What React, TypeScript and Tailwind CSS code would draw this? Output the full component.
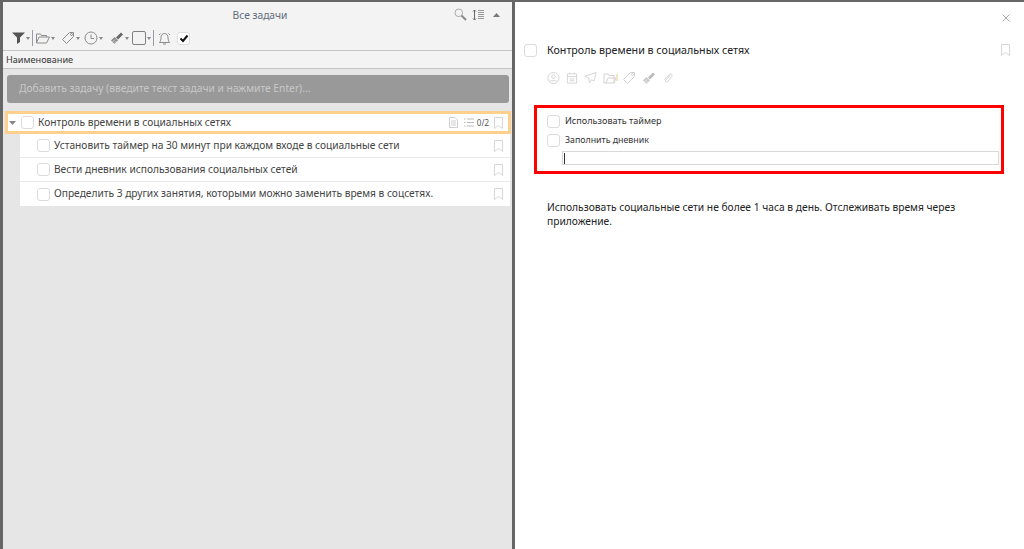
const font = "font-['Noto_Sans','Open_Sans',sans-serif]";

function Check({ checked = false }: { checked?: boolean }) {
  return (
    <span className="flex h-[13px] w-[13px] shrink-0 items-center justify-center rounded-[3px] border border-[#dcdcdc] bg-white">
      {checked && (
        <svg width="10" height="9" viewBox="0 0 10 9"><path d="M1.5 4.5 L4 7 L8.5 1.5" fill="none" stroke="#111" strokeWidth="2" /></svg>
      )}
    </span>
  );
}

function Bookmark({ c = '#d6d6d6' }: { c?: string }) {
  return (
    <svg width="9" height="12" viewBox="0 0 9 12" className="shrink-0"><path d="M.5.5h8v11L4.5 8.5.5 11.5z" fill="none" stroke={c} /></svg>
  );
}

function Caret() {
  return (
    <svg width="4" height="3" viewBox="0 0 4 3" className="ml-[1px]"><path d="M0 0h4L2 3z" fill="#888" /></svg>
  );
}

const sGray = { fill: 'none', stroke: '#8c8c8c', strokeWidth: 1 };
const sLight = { fill: 'none', stroke: '#d2d2d2', strokeWidth: 1 };

function Tag({ s }: { s: typeof sGray }) {
  return (
    <svg width="14" height="14" viewBox="0 0 14 14"><path d="M8.5 1.500h4V5.500L5.500 12.500 1.500 8.500z" {...s} /><circle cx="10.500" cy="3.500" r="1" {...s} /></svg>
  );
}

function Brush({ a, b }: { a: string; b: string }) {
  return (
    <svg width="14" height="14" viewBox="0 0 14 14">
      <path d="M1 9.500 4.500 13l3.500-3.500L4.500 6z" fill={a} />
      <path d="M2.500 11 5 8.500M4 12.500 6.500 10" stroke="#fff" strokeWidth=".7" />
      <path d="M6 6.500 11 1.500l2 2-5 5z" fill={b} />
    </svg>
  );
}

function Toolbar() {
  return (
    <div className="flex h-[22px] items-center pb-[2px] pl-[9px]">
      <span className="flex items-center">
        <svg width="13" height="12" viewBox="0 0 13 12"><path d="M0 .5h13L8 5.500V10L5 12V5.500z" fill="#555" /></svg>
        <Caret />
      </span>
      <span className="ml-[2px] h-[16px] w-px bg-[#9a9aa8]" />
      <span className="ml-[3px] flex items-center">
        <svg width="14" height="11" viewBox="0 0 14 11"><path d="M.5 10V1h4l1 1.500h5V4M.5 10h10l3-6H3z" {...sGray} /></svg>
        <Caret />
      </span>
      <span className="ml-[6px] flex items-center">
        <Tag s={sGray} />
        <Caret />
      </span>
      <span className="ml-[4px] flex items-center">
        <svg width="14" height="14" viewBox="0 0 14 14"><circle cx="7" cy="7" r="6" {...sGray} /><path d="M7 3.500V7.500H10" {...sGray} /></svg>
        <Caret />
      </span>
      <span className="ml-[7px] flex items-center">
        <Brush a="#8a8a8a" b="#666" />
        <Caret />
      </span>
      <span className="ml-[3px] flex items-center">
        <span className="h-[14px] w-[14px] rounded-[2px] border border-[#808080]" />
        <Caret />
      </span>
      <span className="ml-[2px] h-[16px] w-px bg-[#9a9aa8]" />
      <svg width="13" height="13" viewBox="0 0 13 13" className="ml-[4px]"><path d="M6.500 1.500c-2.500 0-3.500 2-3.500 4s-.5 3.500-1.500 5h10c-1-1.500-1.500-3-1.500-5s-1-4-3.500-4zM5 12h3M1 3l1.500-1.500M12 3l-1.500-1.500" {...sGray} /></svg>
      <span className="ml-[6px]"><Check checked /></span>
    </div>
  );
}

function SubTask({ text }: { text: string }) {
  return (
    <div className="flex h-[24px] items-center border-b border-[#e8e8e8] bg-white pr-[7px] pl-[17px] last:border-b-0">
      <Check />
      <span className="ml-[4px] flex-1 text-[10.200px] text-[#444]">{text}</span>
      <Bookmark />
    </div>
  );
}

function MetaIcons() {
  return (
    <div className="mt-[13px] ml-[23px] flex h-[14px] items-center">
      <svg width="13" height="14" viewBox="0 0 14 14"><circle cx="7" cy="7" r="6" {...sLight} /><circle cx="7" cy="5.500" r="2" {...sLight} /><path d="M3.500 10h7" {...sLight} /></svg>
      <svg width="12" height="14" viewBox="0 0 13 14" className="ml-[6px]"><path d="M1.500 2.500h10v10h-10zM1.500 5.500h10M4 1v2M9 1v2M4 8h5M4 10h5" {...sLight} /></svg>
      <svg width="13" height="14" viewBox="0 0 14 14" className="ml-[6px]"><path d="M13 1 1 5l4 2 1 5 2-3 3 1z" {...sLight} /></svg>
      <svg width="15" height="14" viewBox="0 0 15 14" className="ml-[6px]"><path d="M1 12V3h4l1 1.500h5V12zM3 12 5 7h8l-2 5" {...sLight} /><path d="M14 3v7" stroke="#eac98d" /></svg>
      <span className="ml-[4px]"><Tag s={sLight} /></span>
      <span className="ml-[6px]"><Brush a="#c8c8c8" b="#bcbcbc" /></span>
      <svg width="11" height="14" viewBox="0 0 12 14" className="ml-[6px]"><path d="M9.500 3 4 9.500c-1 1.500 1 2.500 2 1.500l4.500-5.500c1.500-2-1-4-2.500-2.500L2.500 9" {...sLight} /></svg>
    </div>
  );
}

export default function App() {
  return (
    <div className={`flex h-[549px] w-[1024px] overflow-hidden border-t-2 border-l-[3px] border-[#666] bg-white ${font}`}>
      {/* Left panel */}
      <div className="flex w-[509px] shrink-0 flex-col bg-[#e6e6e6]">
        <div className="bg-[#f3f3f3]">
          <div className="relative flex h-[26px] items-center justify-center pl-[5px]">
            <span className="pt-[1px] text-[10.250px] text-[#5f6b7a]">Все задачи</span>
            <div className="absolute top-[6px] right-[12px] flex items-center">
              <svg width="13" height="13" viewBox="0 0 13 13"><circle cx="4.800" cy="4.800" r="3.800" fill="none" stroke="#aaa" /><path d="M7.500 7.500 12 12" stroke="#8a8a8a" strokeWidth="2" /></svg>
              <svg width="13" height="12" viewBox="0 0 13 12" className="ml-[5px]"><path d="M2.500 1v10M1 2.500 2.500 1 4 2.500M1 9.500 2.500 11 4 9.500" fill="none" stroke="#666" /><path d="M6 1.500h6M6 3.500h6M6 5.500h6M6 7.500h6M6 9.500h6" stroke="#999" /></svg>
              <svg width="7" height="4" viewBox="0 0 7 4" className="ml-[8px]"><path d="M0 4h7L3.500 0z" fill="#777" /></svg>
            </div>
          </div>
          <Toolbar />
        </div>
        <div className="flex h-[19px] items-center border-y border-[#c4c4c4] bg-[#f3f3f3] pl-[3px] text-[9.150px] text-[#333]">
          Наименование
        </div>
        <div className="mt-[6px] mr-[3px] ml-[4px] flex h-[28px] items-center rounded-[3px] bg-[#999] pl-[12px] text-[10.250px] text-[#c8c8c8]">
          Добавить задачу (введите текст задачи и нажмите Enter)...
        </div>
        <div className="mt-[8px] mr-[1px] ml-[2px] flex h-[23px] items-center border-[3px] border-[#fdd08d] bg-white pr-[4px] pl-[1px]">
          <svg width="7" height="4" viewBox="0 0 7 4" className="shrink-0"><path d="M0 0h7L3.500 4z" fill="#888" /></svg>
          <span className="ml-[5px]"><Check /></span>
          <span className="ml-[4px] flex-1 text-[10.200px] text-[#444]">Контроль времени в социальных сетях</span>
          <svg width="9" height="11" viewBox="0 0 9 11"><path d="M.5.500h5.500l2.500 2.500v7.500h-8zM2 4h5M2 6h5M2 8h5" fill="none" stroke="#cfcfcf" /></svg>
          <svg width="10" height="9" viewBox="0 0 10 9" className="ml-[6px]"><path d="M3 1h7M3 4.500h7M3 8h7M0 1h1.500M0 4.500h1.500M0 8h1.500" stroke="#bbb" /></svg>
          <span className="ml-[3px] text-[8px] text-[#555]">0/2</span>
          <span className="ml-[5px] mr-[1px]"><Bookmark /></span>
        </div>
        <div className="ml-[17px] flex w-[490px] flex-col">
          <SubTask text="Установить таймер на 30 минут при каждом входе в социальные сети" />
          <SubTask text="Вести дневник использования социальных сетей" />
          <SubTask text="Определить 3 других занятия, которыми можно заменить время в соцсетях." />
        </div>
      </div>
      {/* Divider */}
      <div className="w-[3px] shrink-0 bg-[#666]" />
      {/* Right panel */}
      <div className="relative flex-1 bg-white pt-[40px] pr-[2px] pl-[9px]">
        <svg width="8" height="8" viewBox="0 0 8 8" className="absolute top-[12px] right-[14px]"><path d="M.5.500l7 7M7.500.500l-7 7" stroke="#aaa" /></svg>
        <div className="flex items-center pr-[12px]">
          <Check />
          <span className="ml-[10px] flex-1 text-[10.700px] text-[#222]">Контроль времени в социальных сетях</span>
          <Bookmark />
        </div>
        <MetaIcons />
        <div className="mt-[20px] mr-[18px] ml-[10px] flex h-[69px] flex-col border-[3px] border-[#ff0000] pt-[3px] pr-[2px] pl-[10px]">
          <div className="flex h-[20px] items-center">
            <Check />
            <span className="ml-[5px] text-[9.100px] text-[#333]">Использовать таймер</span>
          </div>
          <div className="flex h-[19px] items-center">
            <Check />
            <span className="ml-[5px] text-[8.800px] text-[#333]">Заполнить дневник</span>
          </div>
          <div className="mt-[1px] ml-[15px] flex h-[14px] items-center border border-[#d8d8d8] pl-[1px]">
            <span className="h-[11px] w-px bg-[#333]" />
          </div>
        </div>
        <p className="mt-[26px] mr-[30px] ml-[23px] text-[10.250px] leading-[14px] text-[#222]">
          Использовать социальные сети не более 1 часа в день. Отслеживать время через приложение.
        </p>
      </div>
    </div>
  );
}
